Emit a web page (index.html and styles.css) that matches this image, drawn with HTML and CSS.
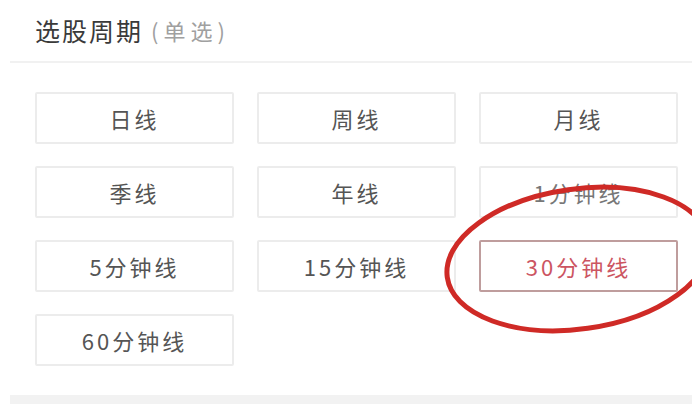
FILE: index.html
```html
<!DOCTYPE html>
<html lang="zh-CN">
<head>
<meta charset="utf-8">
<link rel="stylesheet" href="styles.css">
</head>
<body>
<div class="page">
  <div class="header">
    <span class="title">选股周期</span><span class="sub">(单选)</span>
  </div>
  <div class="divider"></div>
  <div class="grid">
    <div class="opt">日线</div>
    <div class="opt">周线</div>
    <div class="opt">月线</div>
    <div class="opt">季线</div>
    <div class="opt">年线</div>
    <div class="opt faded">1分钟线</div>
    <div class="opt">5分钟线</div>
    <div class="opt">15分钟线</div>
    <div class="opt selected">30分钟线</div>
    <div class="opt">60分钟线</div>
  </div>
  <div class="band"></div>
  <svg class="mark" width="692" height="404" viewBox="0 0 692 404">
    <ellipse cx="578" cy="259" rx="132" ry="70" transform="rotate(-8 578 259)" fill="none" stroke="#cf2a26" stroke-width="5"/>
  </svg>
</div>
</body>
</html>
```

FILE: styles.css
```css
html, body {
  margin: 0;
  padding: 0;
  background: #ffffff;
}
body {
  font-family: "Noto Sans CJK SC", "Noto Sans", sans-serif;
  color: #444;
}
.page {
  position: relative;
  width: 692px;
  height: 404px;
  overflow: hidden;
}
.header {
  height: 61px;
  display: flex;
  align-items: center;
  padding-left: 35px;
  padding-bottom: 2px;
  box-sizing: border-box;
}
.title {
  font-size: 25px;
  letter-spacing: 2px;
  color: #3a3a3a;
}
.sub {
  font-size: 22px;
  letter-spacing: 5px;
  color: #a0a0a0;
  margin-left: 8px;
}
.divider {
  height: 2px;
  margin-left: 10px;
  background: #f1f1f1;
}
.grid {
  display: grid;
  grid-template-columns: repeat(3, 199px);
  grid-auto-rows: 52px;
  column-gap: 23px;
  row-gap: 22px;
  padding: 29px 0 0 35px;
}
.opt {
  border: 2px solid #ececec;
  border-radius: 2px;
  display: flex;
  align-items: center;
  justify-content: center;
  font-size: 22px;
  letter-spacing: 3px;
  color: #555;
}
.opt.faded {
  color: #777;
}
.opt.selected {
  border-color: #bf9d9d;
  color: #cc5562;
}
.band {
  position: absolute;
  left: 10px;
  right: 0;
  top: 395px;
  height: 12px;
  background: #f2f2f2;
}
.mark {
  position: absolute;
  left: 0;
  top: 0;
  pointer-events: none;
}
```
